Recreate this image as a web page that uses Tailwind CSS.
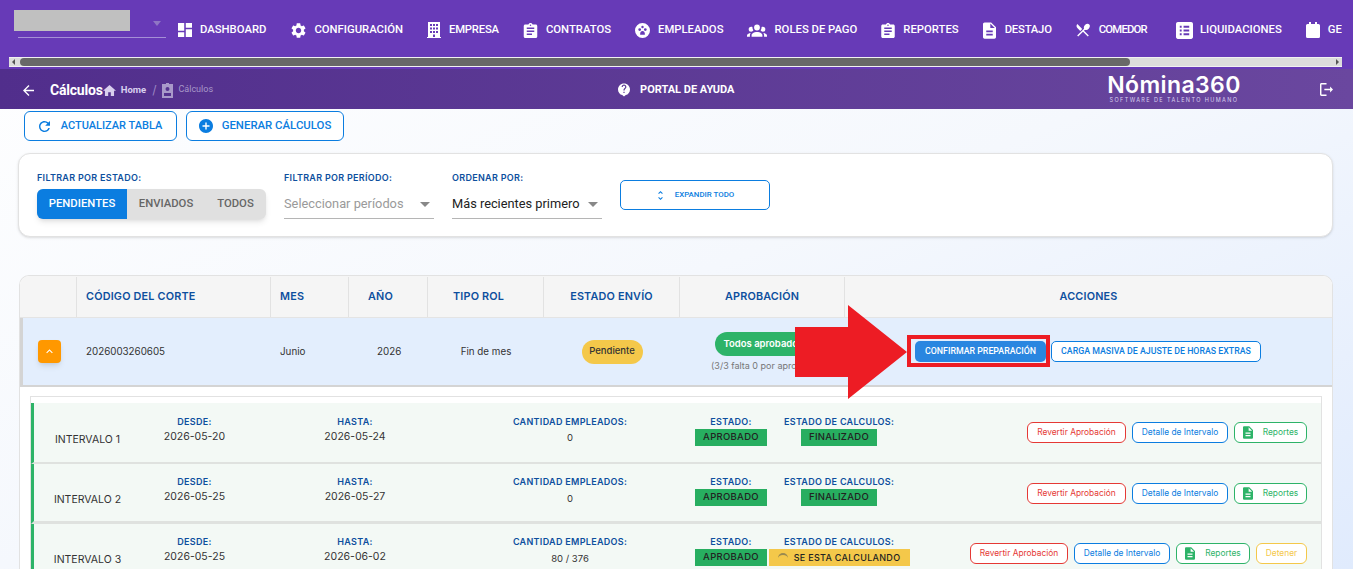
<!DOCTYPE html>
<html lang="es">
<head>
  <meta charset="UTF-8">
  <title>Cálculos - Nómina360</title>
  <script src="https://cdn.jsdelivr.net/npm/@tailwindcss/browser@4"></script>
</head>
<body class="relative h-[569px] w-[1353px] overflow-hidden bg-gradient-to-br from-white via-[#f5f8fd] to-[#e0ebfd] font-['Inter',sans-serif]">

<!-- Menu superior -->
<div class="h-[69px] bg-[#673ab7] relative font-['Roboto',sans-serif] font-medium text-white text-[11.3px]">
  <div class="flex h-[56px] w-[1342px] overflow-hidden">
    <div class="w-[153px] ml-[14px] mr-[11px] shrink-0 pt-[10px] relative">
      <div class="w-[116px] h-[21px] bg-[#c0c0c0]"></div>
      <div class="absolute left-[139px] top-[21px] w-0 h-0 border-x-[4px] border-x-transparent border-t-[5px] border-t-[#8f76c4]"></div>
      <div class="absolute left-[4px] top-[37px] w-[148px] h-px bg-[#a58fd6]"></div>
    </div>
    <div class="flex items-center gap-[24px] h-[60px] whitespace-nowrap">
      <a class="flex items-center gap-[8px]"><svg class="w-[14px] h-[14px]" viewBox="3 3 18 18" fill="currentColor"><path d="M3 13h8V3H3v10zm0 8h8v-6H3v6zm10 0h8V11h-8v10zm0-18v6h8V3h-8z"/></svg>DASHBOARD</a>
      <a class="flex items-center gap-[8px] ml-[1px]"><svg class="w-[15px] h-[15px]" viewBox="2 2 20 20" fill="currentColor"><path d="M19.14 12.94c.04-.3.06-.61.06-.94 0-.32-.02-.64-.07-.94l2.03-1.58a.49.49 0 0 0 .12-.61l-1.92-3.32a.488.488 0 0 0-.59-.22l-2.39.96c-.5-.38-1.03-.7-1.62-.94l-.36-2.54a.484.484 0 0 0-.48-.41h-3.84c-.24 0-.43.17-.47.41l-.36 2.54c-.59.24-1.13.57-1.62.94l-2.39-.96c-.22-.08-.47 0-.59.22L2.74 8.87c-.12.21-.08.47.12.61l2.03 1.58c-.05.3-.09.63-.09.94s.02.64.07.94l-2.03 1.58a.49.49 0 0 0-.12.61l1.92 3.32c.12.22.37.29.59.22l2.39-.96c.5.38 1.03.7 1.62.94l.36 2.54c.05.24.24.41.48.41h3.84c.24 0 .44-.17.47-.41l.36-2.54c.59-.24 1.13-.56 1.62-.94l2.39.96c.22.08.47 0 .59-.22l1.92-3.32c.12-.22.07-.47-.12-.61l-2.01-1.58zM12 15.6c-1.98 0-3.6-1.62-3.6-3.6s1.62-3.6 3.6-3.6 3.6 1.62 3.6 3.6-1.62 3.6-3.6 3.6z"/></svg>CONFIGURACIÓN</a>
      <a class="flex items-center gap-[8px] tracking-[-0.2px]"><svg class="w-[14px] h-[16px]" viewBox="0 0 14 16" fill="currentColor"><path fill-rule="evenodd" d="M1 0h12v15h1v1H0v-1h1V0zm2 2v2h2V2H3zm3 0v2h2V2H6zm3 0v2h2V2H9zM3 5.500v2h2v-2H3zm3 0v2h2v-2H6zm3 0v2h2v-2H9zM3 9v2h2V9H3zm6 0v2h2V9H9zM6 9v2h2V9H6zm0 3.500V15h2v-2.500H6z"/></svg>EMPRESA</a>
      <a class="flex items-center gap-[8px]"><svg class="w-[15px] h-[15px]" viewBox="3 1 18 20" fill="currentColor"><path d="M19 3h-4.180C14.400 1.840 13.300 1 12 1c-1.300 0-2.400.840-2.820 2H5c-1.100 0-2 .900-2 2v14c0 1.100.900 2 2 2h14c1.100 0 2-.900 2-2V5c0-1.100-.900-2-2-2zm-7 0c.550 0 1 .450 1 1s-.450 1-1 1-1-.450-1-1 .450-1 1-1zm2 14H7v-2h7v2zm3-4H7v-2h10v2zm0-4H7V7h10v2z"/></svg>CONTRATOS</a>
      <a class="flex items-center gap-[8px]"><svg class="w-[15px] h-[15px]" viewBox="0 0 16 16" fill="currentColor"><path fill-rule="evenodd" d="M8 0a8 8 0 1 1 0 16A8 8 0 0 1 8 0zM5 5.500a1.500 1.500 0 1 0 0 3 1.500 1.500 0 0 0 0-3zm6 0a1.500 1.500 0 1 0 0 3 1.500 1.500 0 0 0 0-3zM8 3a1.300 1.300 0 1 0 0 2.600A1.300 1.300 0 0 0 8 3zm0 5.500c-1.500 0-2.500 1.200-2.500 3v1h5v-1c0-1.800-1-3-2.500-3z"/></svg>EMPLEADOS</a>
      <a class="flex items-center gap-[8px] -ml-[1px]"><svg class="w-[20px] h-[20px]" viewBox="0 0 24 24" fill="currentColor"><path d="M12,5.500A3.500,3.500 0 0,1 15.500,9A3.500,3.500 0 0,1 12,12.500A3.500,3.500 0 0,1 8.500,9A3.500,3.500 0 0,1 12,5.500M5,8C5.560,8 6.080,8.150 6.530,8.420C6.380,9.850 6.800,11.270 7.660,12.380C7.160,13.340 6.160,14 5,14A3,3 0 0,1 2,11A3,3 0 0,1 5,8M19,8A3,3 0 0,1 22,11A3,3 0 0,1 19,14C17.840,14 16.840,13.340 16.340,12.380C17.200,11.270 17.620,9.850 17.470,8.420C17.920,8.150 18.440,8 19,8M5.500,18.250C5.500,16.180 8.410,14.500 12,14.500C15.590,14.500 18.500,16.180 18.500,18.250V20H5.500V18.250M0,20V18.500C0,17.110 1.890,15.940 4.450,15.600C3.860,16.280 3.500,17.220 3.500,18.250V20H0M24,20H20.500V18.250C20.500,17.220 20.140,16.280 19.550,15.600C22.110,15.940 24,17.110 24,18.500V20Z"/></svg>ROLES DE PAGO</a>
      <a class="flex items-center gap-[8px]"><svg class="w-[14px] h-[15px]" viewBox="3 1 18 20" fill="currentColor"><path d="M19 3h-4.180C14.400 1.840 13.300 1 12 1c-1.300 0-2.400.840-2.820 2H5c-1.100 0-2 .900-2 2v14c0 1.100.900 2 2 2h14c1.100 0 2-.900 2-2V5c0-1.100-.900-2-2-2zm-7 0c.550 0 1 .450 1 1s-.450 1-1 1-1-.450-1-1 .450-1 1-1zm2 14H7v-2h7v2zm3-4H7v-2h10v2zm0-4H7V7h10v2z"/></svg>REPORTES</a>
      <a class="flex items-center gap-[9px] tracking-[-0.2px]"><svg class="w-[13px] h-[17px]" viewBox="4 2 16 20" fill="currentColor"><path d="M14 2H6c-1.100 0-2 .900-2 2v16c0 1.100.900 2 2 2h12c1.100 0 2-.900 2-2V8l-6-6zm2 16H8v-2h8v2zm0-4H8v-2h8v2zm-3-5V3.500L18.500 9H13z"/></svg>DESTAJO</a>
      <a class="flex items-center gap-[9px] tracking-[-0.8px]"><svg class="w-[14px] h-[14px]" viewBox="2 2 20 20" fill="currentColor"><path d="M8.100 13.340l2.830-2.830L3.910 3.500c-1.560 1.560-1.560 4.090 0 5.660l4.190 4.180zm6.780-1.810c1.530.710 3.680.210 5.270-1.380 1.910-1.910 2.280-4.650.810-6.120-1.460-1.460-4.200-1.100-6.120.810-1.590 1.590-2.090 3.740-1.380 5.270L3.700 19.870l1.410 1.410L12 14.410l6.880 6.880 1.410-1.410L13.410 13l1.470-1.470z"/></svg>COMEDOR</a>
      <a class="flex items-center gap-[7px] ml-[5px]"><svg class="w-[17px] h-[17px]" viewBox="3 3 18 18" fill="currentColor"><path d="M19 3H5c-1.100 0-2 .900-2 2v14c0 1.100.900 2 2 2h14c1.100 0 2-.900 2-2V5c0-1.100-.900-2-2-2zM9 17H7v-2h2v2zm0-4H7v-2h2v2zm0-4H7V7h2v2zm8 8h-6v-2h6v2zm0-4h-6v-2h6v2zm0-4h-6V7h6v2z"/></svg>LIQUIDACIONES</a>
      <a class="flex items-center gap-[8px]"><svg class="w-[14px] h-[16px]" viewBox="0 0 14 16" fill="currentColor"><path d="M3 0h2v2h4V0h2v2h1.500A1.500 1.500 0 0 1 14 3.500v11a1.500 1.500 0 0 1-1.500 1.500h-11A1.500 1.500 0 0 1 0 14.500v-11A1.500 1.500 0 0 1 1.500 2H3V0z"/></svg>GE</a>
    </div>
  </div>
  <!-- barra de scroll -->
  <div class="absolute left-[9px] top-[57px] w-[1333px] h-[10px] bg-[#dcdcdc] border-y border-[#f1f1f1] flex items-center">
    <div class="w-0 h-0 ml-[3px] border-y-[3px] border-y-transparent border-r-[3px] border-r-[#555]"></div>
    <div class="ml-[5px] w-[1110px] h-[8px] rounded-[4px] bg-[#686868]"></div>
    <div class="w-0 h-0 ml-auto mr-[3px] border-y-[3px] border-y-transparent border-l-[3px] border-l-[#555]"></div>
  </div>
</div>

<!-- Encabezado -->
<div class="h-[40px] pt-[2px] bg-gradient-to-r from-[#512e8c] to-[#6a479f] flex items-center text-white relative">
  <svg class="w-[11px] h-[11px] ml-[23px] mr-[2px]" viewBox="4 4 16 16" fill="currentColor"><path d="M20 11H7.830l5.590-5.590L12 4l-8 8 8 8 1.410-1.410L7.830 13H20v-2z"/></svg>
  <span class="ml-[14px] font-['Roboto',sans-serif] font-bold text-[14px] tracking-[-0.2px]">Cálculos</span>
  <svg class="w-[13px] h-[13px]" viewBox="2 3 20 17" fill="#d9cfee"><path d="M10 20v-6h4v6h5v-8h3L12 3 2 12h3v8z"/></svg>
  <span class="ml-[5px] font-['Roboto',sans-serif] font-bold text-[9.500px] text-[#d9cfee]">Home</span>
  <span class="ml-[6px] text-[12px] text-[#9b86c4]">/</span>
  <svg class="ml-[6px] w-[11px] h-[15px]" viewBox="0 0 11 15" fill="#a899c9"><path fill-rule="evenodd" d="M0 1h4V0h3v1h4v14H0V1zm5.500 3a2 2 0 1 0 0 4 2 2 0 0 0 0-4zM2 10v3h7v-3H2z"/></svg>
  <span class="ml-[5px] font-['Roboto',sans-serif] text-[9px] text-[#a899c9]">Cálculos</span>
  <svg class="ml-[405px] w-[12px] h-[14px]" viewBox="2 2 20 22" fill="currentColor"><path d="M12 2C6.480 2 2 6.480 2 12c0 4.500 3 8.300 7 9.500l3 2.500 3-2.500c4-1.200 7-5 7-9.500 0-5.520-4.480-10-10-10zm1 16h-2v-2h2v2zm2.070-7.750l-.900.920C13.450 11.900 13 12.500 13 14h-2v-.500c0-1.100.450-2.100 1.170-2.830l1.240-1.260c.370-.360.590-.860.590-1.410 0-1.100-.900-2-2-2s-2 .900-2 2H8c0-2.210 1.790-4 4-4s4 1.790 4 4c0 .880-.360 1.680-.930 2.250z"/></svg>
  <span class="ml-[10px] font-['Roboto',sans-serif] font-bold text-[11px]">PORTAL DE AYUDA</span>
  <div class="absolute left-[1106px] top-[5px] w-[136px] flex flex-col items-center">
    <div class="font-['Inter',sans-serif] font-semibold text-[23px] tracking-[0.4px] leading-[22px]">Nómina360</div>
    <div class="text-[5.500px] tracking-[1.400px] leading-[7px] mt-[1px] text-[#d9cfee] whitespace-nowrap">SOFTWARE DE TALENTO HUMANO</div>
  </div>
  <svg class="absolute left-[1320px] top-[14px] w-[13px] h-[13px]" viewBox="3 3 18 18" fill="currentColor"><path d="M5 5h7V3H5c-1.100 0-2 .900-2 2v14c0 1.100.900 2 2 2h7v-2H5V5zm16 7l-4-4v3H9v2h8v3l4-4z"/></svg>
</div>

<!-- Botones -->
<div class="flex gap-[9px] ml-[24px] mt-[2px] h-[30px] text-[#0b7de0] text-[11px] font-medium font-['Roboto',sans-serif]">
  <button class="w-[153px] rounded-[6px] border border-[#0b7de0] bg-white flex items-center justify-center gap-[11px]"><svg class="w-[11px] h-[11px]" viewBox="4 4 16 16" fill="currentColor"><path d="M17.650 6.350A7.958 7.958 0 0 0 12 4c-4.420 0-7.990 3.580-7.990 8s3.570 8 7.990 8c3.730 0 6.840-2.550 7.730-6h-2.080A5.990 5.990 0 0 1 12 18c-3.310 0-6-2.690-6-6s2.690-6 6-6c1.660 0 3.140.690 4.220 1.780L13 11h7V4l-2.350 2.350z"/></svg>ACTUALIZAR TABLA</button>
  <button class="w-[158px] rounded-[6px] border border-[#0b7de0] bg-white flex items-center justify-center gap-[9px] text-[11.400px]"><svg class="w-[14px] h-[14px]" viewBox="2 2 20 20" fill="currentColor"><path d="M12 2C6.480 2 2 6.480 2 12s4.480 10 10 10 10-4.480 10-10S17.520 2 12 2zm5 11h-4v4h-2v-4H7v-2h4V7h2v4h4v2z"/></svg>GENERAR CÁLCULOS</button>
</div>

<!-- Filtros -->
<div class="ml-[18px] mt-[12px] w-[1315px] h-[84px] bg-white border border-[#e2e2e2] rounded-[12px] shadow-sm relative flex pl-[18px]">
  <div class="w-[247px] pt-[17px]">
    <div class="text-[9px] font-semibold tracking-[0.3px] text-[#0d4f9e] h-[18px]">FILTRAR POR ESTADO:</div>
    <div class="flex h-[30px] w-[229px] rounded-[6px] overflow-hidden bg-[#e0e0e0] shadow-md text-[11.300px] font-medium font-['Roboto',sans-serif] text-[#666]">
      <div class="w-[90px] bg-[#0b7de0] text-white flex items-center justify-center">PENDIENTES</div>
      <div class="w-[78px] flex items-center justify-center">ENVIADOS</div>
      <div class="w-[61px] flex items-center justify-center">TODOS</div>
    </div>
  </div>
  <div class="w-[168px] pt-[17px]">
    <div class="text-[9px] font-semibold tracking-[0.3px] text-[#0d4f9e] h-[18px]">FILTRAR POR PERÍODO:</div>
    <div class="w-[150px] h-[30px] pt-[1px] border-b border-[#b5b5b5] flex items-center justify-between pr-[4px] text-[12.800px] text-[#9a9a9a] font-['Roboto',sans-serif]">Seleccionar períodos<span class="w-0 h-0 border-x-[5px] border-x-transparent border-t-[5px] border-t-[#888]"></span></div>
  </div>
  <div class="w-[168px] pt-[17px]">
    <div class="text-[9px] font-semibold tracking-[0.3px] text-[#0d4f9e] h-[18px]">ORDENAR POR:</div>
    <div class="w-[150px] h-[30px] pt-[1px] border-b border-[#b5b5b5] flex items-center justify-between pr-[4px] text-[12.800px] text-[#222] font-['Roboto',sans-serif]">Más recientes primero<span class="w-0 h-0 border-x-[5px] border-x-transparent border-t-[5px] border-t-[#888]"></span></div>
  </div>
  <button class="mt-[26px] w-[150px] h-[30px] rounded-[5px] border border-[#0b7de0] text-[#0b7de0] text-[7.900px] font-medium font-['Roboto',sans-serif] flex items-center justify-center gap-[10px]"><svg class="w-[9px] h-[9px]" viewBox="7 3 10 18" fill="currentColor"><path d="M12 5.830L15.170 9l1.410-1.410L12 3 7.410 7.590 8.830 9 12 5.830zm0 12.340L8.830 15l-1.410 1.410L12 21l4.590-4.590L15.170 15 12 18.170z"/></svg>EXPANDIR TODO</button>
</div>

<!-- Tabla -->
<div class="ml-[19px] mt-[38px] w-[1314px] h-[300px] bg-white border-x border-t border-[#e2e2e2] rounded-t-[10px] overflow-hidden">
  <div class="grid grid-cols-[57px_194px_78px_79px_116px_136px_165px_1fr] h-[42px] pt-[1px] bg-[#f5f5f5] border-b border-[#e4e4e4] text-[10.800px] font-semibold tracking-[0.2px] text-[#0d4f9e] text-center">
    <div class="border-r border-[#e2e2e2]"></div>
    <div class="border-r border-[#e2e2e2] flex items-center pl-[9px]">CÓDIGO DEL CORTE</div>
    <div class="border-r border-[#e2e2e2] flex items-center pl-[9px]">MES</div>
    <div class="border-r border-[#e2e2e2] flex items-center pl-[19px]">AÑO</div>
    <div class="border-r border-[#e2e2e2] flex items-center pl-[25px]">TIPO ROL</div>
    <div class="border-r border-[#e2e2e2] flex items-center justify-center">ESTADO ENVÍO</div>
    <div class="border-r border-[#e2e2e2] flex items-center justify-center">APROBACIÓN</div>
    <div class="flex items-center justify-center">ACCIONES</div>
  </div>
  <div class="grid grid-cols-[54px_194px_78px_79px_116px_136px_165px_1fr] h-[69px] bg-[#e3eefd] border-l-[3px] border-b-2 border-[#d4d4d4] text-[9.800px] text-[#333] items-center">
    <div class="pl-[15px]"><div class="w-[23px] h-[23px] rounded-[4px] bg-[#ff9800] shadow-md text-white flex items-center justify-center"><svg class="w-[13px] h-[13px]" viewBox="0 0 24 24" fill="currentColor"><path d="M7.410 15.410L12 10.830l4.590 4.580L18 14l-6-6-6 6z"/></svg></div></div>
    <div class="pl-[9px] pt-[2px]">2026003260605</div>
    <div class="pl-[9px] pt-[2px]">Junio</div>
    <div class="pl-[28px] pt-[2px]">2026</div>
    <div class="text-center pt-[2px]">Fin de mes</div>
    <div class="flex justify-center"><span class="h-[24px] w-[61px] rounded-full bg-[#f4c84a] flex items-center justify-center text-[9.500px] font-medium text-[#333]">Pendiente</span></div>
    <div class="flex flex-col items-center gap-[3px] pt-[2px]">
      <span class="h-[24px] w-[96px] rounded-full bg-[#2db368] text-white text-[9.500px] font-semibold flex items-center pl-[9px] whitespace-nowrap overflow-hidden">Todos aprobados</span>
      <span class="text-[9px] text-[#777] whitespace-nowrap">(3/3 falta 0 por aprobar)</span>
    </div>
    <div class="flex items-center gap-[5px] pl-[70px] text-[8.800px] font-medium font-['Roboto',sans-serif]">
      <button class="w-[131px] h-[21px] rounded-[5px] bg-[#2a86e0] text-white whitespace-nowrap">CONFIRMAR PREPARACIÓN</button>
      <button class="w-[210px] h-[21px] rounded-[5px] bg-white border border-[#0b7de0] text-[#0b7de0] whitespace-nowrap">CARGA MASIVA DE AJUSTE DE HORAS EXTRAS</button>
    </div>
  </div>

  <!-- Intervalos -->
  <div class="mx-[10px] mt-[9px] border-x border-t border-[#e2e2e2] pt-[6px] text-[10.500px] text-[#333] text-center">
    <div class="flex h-[61px] bg-[#f3f9f5] border-l-[3px] border-l-[#2db368] border-b-[2px] border-b-[#dfe2df]">
      <div class="w-[107px] pt-[29px] text-[#333]">INTERVALO 1</div>
      <div class="w-[107px] pt-[12px]"><div class="text-[9px] font-semibold tracking-[0.3px] text-[#0d4f9e] h-[14px]">DESDE:</div>2026-05-20</div>
      <div class="w-[214px] pt-[12px]"><div class="text-[9px] font-semibold tracking-[0.3px] text-[#0d4f9e] h-[14px]">HASTA:</div>2026-05-24</div>
      <div class="w-[216px] pt-[12px]"><div class="text-[9px] font-semibold tracking-[0.3px] text-[#0d4f9e] h-[16px]">CANTIDAD EMPLEADOS:</div><div class="text-[9.500px]">0</div></div>
      <div class="w-[106px] pt-[12px]"><div class="text-[9px] font-semibold tracking-[0.3px] text-[#0d4f9e] h-[14px]">ESTADO:</div><div class="flex justify-center"><span class="w-[72px] h-[17px] bg-[#27ae60] text-[#222] text-[9.500px] font-medium tracking-[0.3px] flex items-center justify-center">APROBADO</span></div></div>
      <div class="w-[110px] pt-[12px]"><div class="text-[9px] font-semibold tracking-[0.3px] text-[#0d4f9e] h-[14px] whitespace-nowrap">ESTADO DE CALCULOS:</div><div class="flex justify-center"><span class="w-[76px] h-[17px] bg-[#27ae60] text-[#222] text-[9.500px] font-medium tracking-[0.3px] flex items-center justify-center">FINALIZADO</span></div></div>
      <div class="ml-auto flex items-start gap-[6px] pt-[19px] pr-[14px] text-[8.400px]">
        <button class="w-[99px] h-[21px] rounded-[6px] bg-white border border-[#e53935] text-[#e53935]">Revertir Aprobación</button>
        <button class="w-[96px] h-[21px] rounded-[6px] bg-white border border-[#0b7de0] text-[#0b7de0]">Detalle de Intervalo</button>
        <button class="w-[73px] h-[21px] rounded-[6px] bg-white border border-[#2db368] text-[#2db368] flex items-center justify-center gap-[10px]"><svg class="w-[10px] h-[13px]" viewBox="4 2 16 20" fill="currentColor"><path d="M14 2H6c-1.100 0-2 .900-2 2v16c0 1.100.900 2 2 2h12c1.100 0 2-.900 2-2V8l-6-6zm2 16H8v-2h8v2zm0-4H8v-2h8v2zm-3-5V3.500L18.500 9H13z"/></svg>Reportes</button>
      </div>
    </div>
    <div class="flex h-[60px] bg-[#f3f9f5] border-l-[3px] border-l-[#2db368] border-b-[3px] border-b-[#dfe2df]">
      <div class="w-[107px] pt-[28px] text-[#333]">INTERVALO 2</div>
      <div class="w-[107px] pt-[11px]"><div class="text-[9px] font-semibold tracking-[0.3px] text-[#0d4f9e] h-[14px]">DESDE:</div>2026-05-25</div>
      <div class="w-[214px] pt-[11px]"><div class="text-[9px] font-semibold tracking-[0.3px] text-[#0d4f9e] h-[14px]">HASTA:</div>2026-05-27</div>
      <div class="w-[216px] pt-[11px]"><div class="text-[9px] font-semibold tracking-[0.3px] text-[#0d4f9e] h-[17px]">CANTIDAD EMPLEADOS:</div><div class="text-[9.500px]">0</div></div>
      <div class="w-[106px] pt-[11px]"><div class="text-[9px] font-semibold tracking-[0.3px] text-[#0d4f9e] h-[14px]">ESTADO:</div><div class="flex justify-center"><span class="w-[72px] h-[17px] bg-[#27ae60] text-[#222] text-[9.500px] font-medium tracking-[0.3px] flex items-center justify-center">APROBADO</span></div></div>
      <div class="w-[110px] pt-[11px]"><div class="text-[9px] font-semibold tracking-[0.3px] text-[#0d4f9e] h-[14px] whitespace-nowrap">ESTADO DE CALCULOS:</div><div class="flex justify-center"><span class="w-[76px] h-[17px] bg-[#27ae60] text-[#222] text-[9.500px] font-medium tracking-[0.3px] flex items-center justify-center">FINALIZADO</span></div></div>
      <div class="ml-auto flex items-start gap-[6px] pt-[19px] pr-[14px] text-[8.400px]">
        <button class="w-[99px] h-[21px] rounded-[6px] bg-white border border-[#e53935] text-[#e53935]">Revertir Aprobación</button>
        <button class="w-[96px] h-[21px] rounded-[6px] bg-white border border-[#0b7de0] text-[#0b7de0]">Detalle de Intervalo</button>
        <button class="w-[73px] h-[21px] rounded-[6px] bg-white border border-[#2db368] text-[#2db368] flex items-center justify-center gap-[10px]"><svg class="w-[10px] h-[13px]" viewBox="4 2 16 20" fill="currentColor"><path d="M14 2H6c-1.100 0-2 .900-2 2v16c0 1.100.900 2 2 2h12c1.100 0 2-.900 2-2V8l-6-6zm2 16H8v-2h8v2zm0-4H8v-2h8v2zm-3-5V3.500L18.500 9H13z"/></svg>Reportes</button>
      </div>
    </div>
    <div class="flex h-[70px] bg-[#f3f9f5] border-l-[3px] border-l-[#2db368]">
      <div class="w-[107px] pt-[28px] text-[#333]">INTERVALO 3</div>
      <div class="w-[107px] pt-[11px]"><div class="text-[9px] font-semibold tracking-[0.3px] text-[#0d4f9e] h-[14px]">DESDE:</div>2026-05-25</div>
      <div class="w-[214px] pt-[11px]"><div class="text-[9px] font-semibold tracking-[0.3px] text-[#0d4f9e] h-[14px]">HASTA:</div>2026-06-02</div>
      <div class="w-[216px] pt-[11px]"><div class="text-[9px] font-semibold tracking-[0.3px] text-[#0d4f9e] h-[17px]">CANTIDAD EMPLEADOS:</div><div class="text-[9.500px]">80 / 376</div></div>
      <div class="w-[106px] pt-[11px]"><div class="text-[9px] font-semibold tracking-[0.3px] text-[#0d4f9e] h-[14px]">ESTADO:</div><div class="flex justify-center"><span class="w-[72px] h-[17px] bg-[#27ae60] text-[#222] text-[9.500px] font-medium tracking-[0.3px] flex items-center justify-center">APROBADO</span></div></div>
      <div class="w-[110px] pt-[11px]"><div class="text-[9px] font-semibold tracking-[0.3px] text-[#0d4f9e] h-[14px] whitespace-nowrap">ESTADO DE CALCULOS:</div><div class="flex justify-center"><span class="shrink-0 w-[141px] h-[17px] bg-[#f4c84a] text-[#222] text-[9px] font-medium tracking-[0.3px] flex items-center justify-center gap-[6px] whitespace-nowrap"><span class="w-[10px] h-[10px] rounded-full border-t-2 border-[#9a8a50]"></span>SE ESTA CALCULANDO</span></div></div>
      <div class="ml-auto flex items-start gap-[6px] pt-[19px] pr-[14px] text-[8.400px]">
        <button class="w-[98px] h-[21px] rounded-[6px] bg-white border border-[#e53935] text-[#e53935]">Revertir Aprobación</button>
        <button class="w-[96px] h-[21px] rounded-[6px] bg-white border border-[#0b7de0] text-[#0b7de0]">Detalle de Intervalo</button>
        <button class="w-[74px] h-[21px] rounded-[6px] bg-white border border-[#2db368] text-[#2db368] flex items-center justify-center gap-[10px]"><svg class="w-[10px] h-[13px]" viewBox="4 2 16 20" fill="currentColor"><path d="M14 2H6c-1.100 0-2 .900-2 2v16c0 1.100.900 2 2 2h12c1.100 0 2-.900 2-2V8l-6-6zm2 16H8v-2h8v2zm0-4H8v-2h8v2zm-3-5V3.500L18.500 9H13z"/></svg>Reportes</button>
        <button class="w-[51px] h-[21px] rounded-[6px] bg-white border border-[#f4c84a] text-[#f4c84a]">Detener</button>
      </div>
    </div>
  </div>
</div>

<!-- Flecha y recuadro rojo sobre la captura -->
<svg class="absolute left-[795px] top-[305px] w-[114px] h-[94px]" viewBox="0 0 114 94" fill="#ed1c24"><path d="M0 22h53V0l59 47-59 47V72H0z"/></svg>
<div class="absolute left-[907px] top-[335px] w-[143px] h-[32px] border-[4px] border-[#ed1c24]"></div>

</body>
</html>
